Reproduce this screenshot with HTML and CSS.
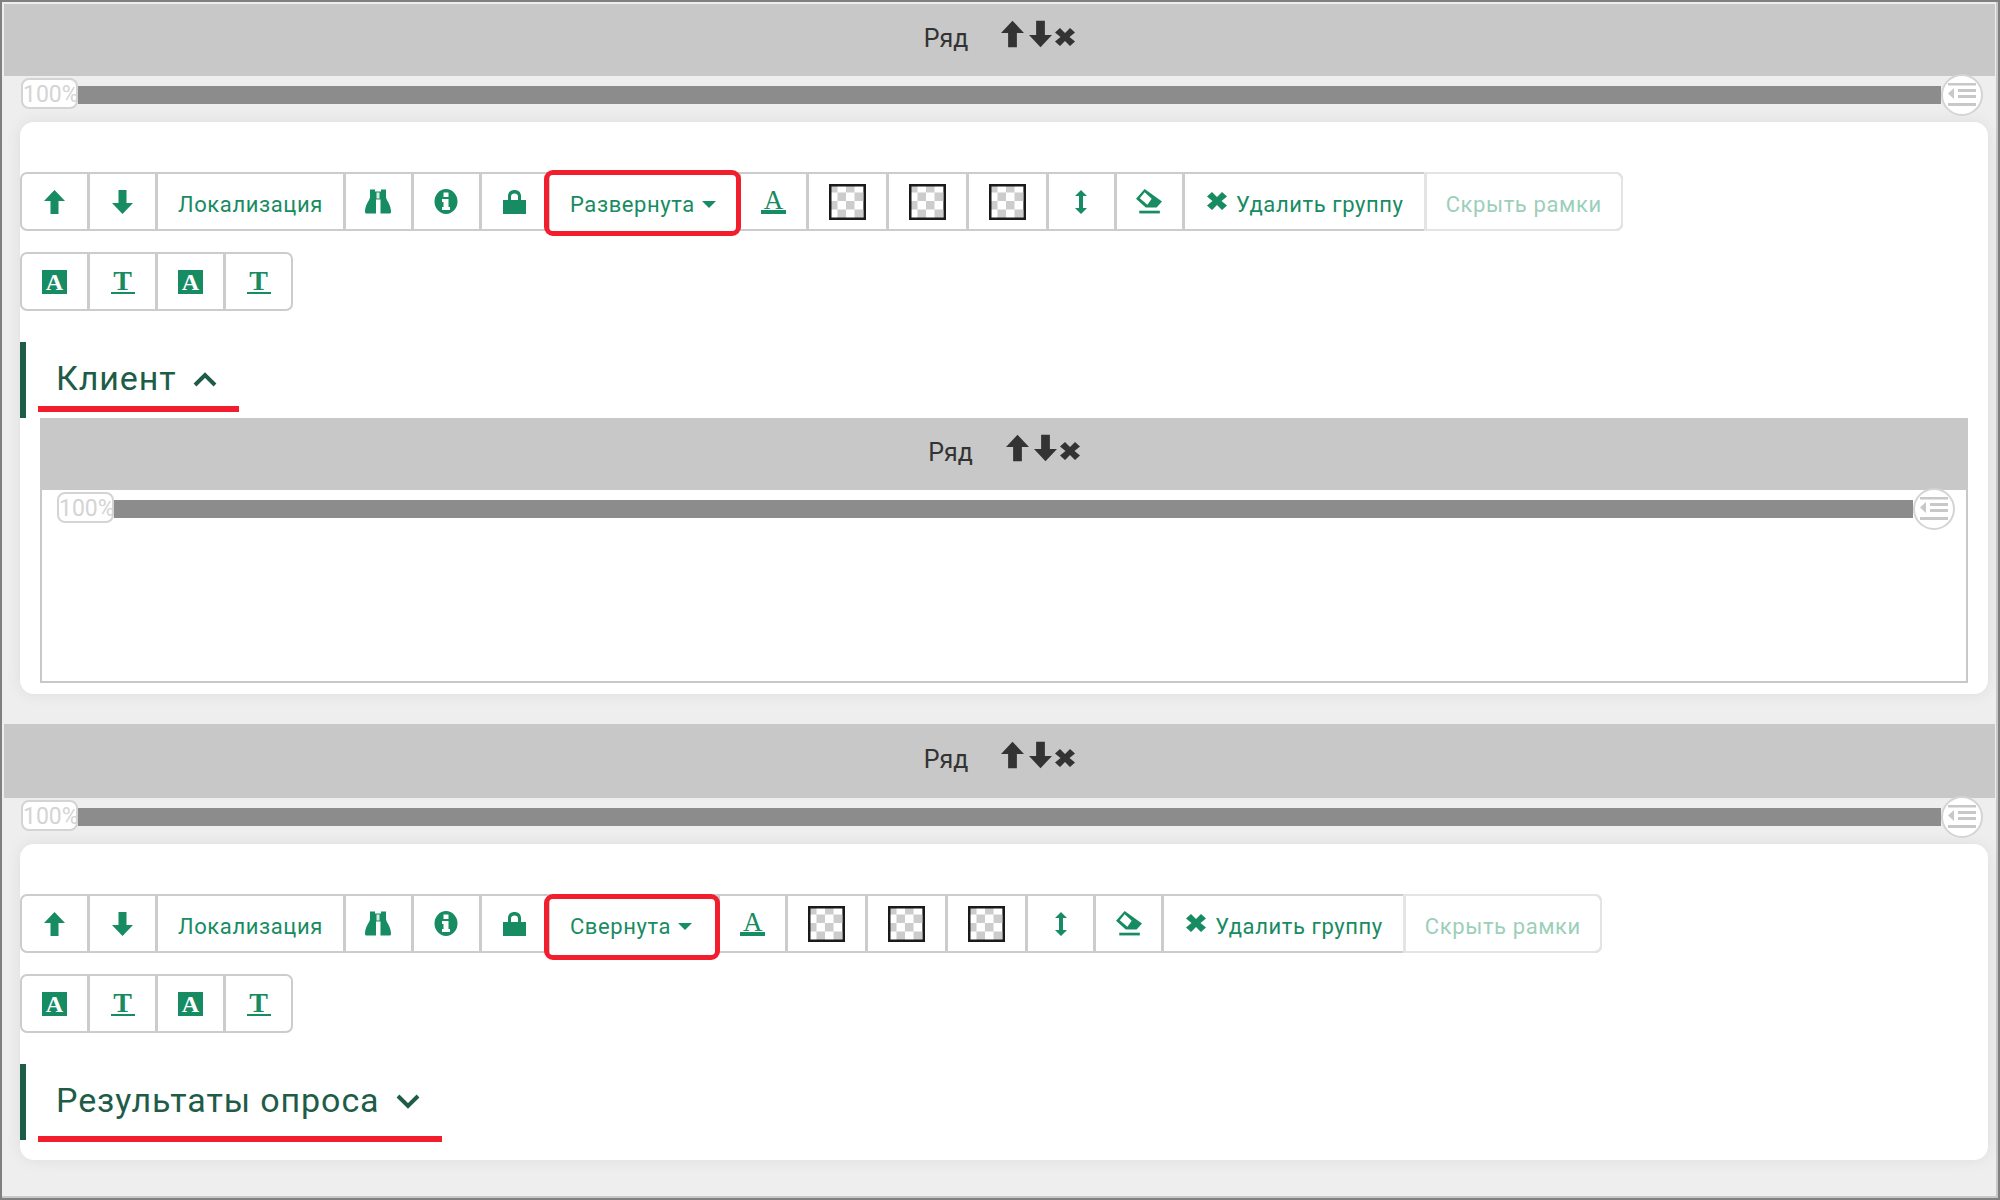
FILE: index.html
```html
<!DOCTYPE html>
<html lang="ru">
<head>
  <meta charset="UTF-8">
  <title>Конструктор формы</title>
  <link rel="stylesheet" href="styles.css">
</head>
<body>

  <svg class="defs" width="0" height="0">
    <symbol id="i-up" viewBox="0 0 21 24"><path d="M10.5 0 21 11h-6.500v13h-8V11H0z"/></symbol>
    <symbol id="i-down" viewBox="0 0 21 24"><path d="M10.5 24 0 13h6.500V0h8v13H21z"/></symbol>
    <symbol id="i-close" viewBox="0 0 20 18"><path d="M5 0l5 5 5-5 5 4.500-5.500 4.500L20 13.500 15 18l-5-5-5 5-5-4.500L5.500 9 0 4.500z"/></symbol>
    <symbol id="i-binoculars" viewBox="0 0 26 24"><path d="M5 0h5v2h6V0h5v8c1 4 5 7 5 14.500 0 .9-.5 1.500-1.500 1.500h-9V10H11v14H1.500C.5 24 0 23.400 0 22.500 0 15 4 12 5 8z"/><path fill="#d8ece4" d="M11.500 3h3v6h-3z"/></symbol>
    <symbol id="i-info" viewBox="0 0 25 25"><path fill-rule="evenodd" d="M12.500 0a11.500 12.500 0 1 1 0 25 11.500 12.500 0 0 1 0-25zM10 3.500v4.500h5V3.500zM8.500 10v3H10v5H8.500v3h8v-3H15v-8z"/></symbol>
    <symbol id="i-lock" viewBox="0 0 23 24"><path fill-rule="evenodd" d="M0 10h5V6c0-4 3-6 6.500-6S18 2 18 6v4h5v14H0zM8 10h7V6.500c0-2-1.500-3-3.500-3S8 4.500 8 6.500z"/></symbol>
    <symbol id="i-updown" viewBox="0 0 12 24"><path d="M6 0l6 6H8v12h4l-6 6-6-6h4V6H0z"/></symbol>
    <symbol id="i-eraser" viewBox="0 0 24 23"><path fill-rule="evenodd" d="M8 0 24 11.500 19 17H9L0 9zM8 3 3.500 8.500l7 6 4-5.500z"/><path d="M3 20h19v2.500H3z"/></symbol>
    <symbol id="i-outdent" viewBox="0 0 28 24"><path d="M0 0h28v2.500H0zM10 6h18v3H10zM10 12h18v3H10zM0 20h28v3H0zM6 5v11L0 10.500z"/></symbol>
    <pattern id="checker" width="17" height="17" patternUnits="userSpaceOnUse">
      <path fill="#ccc" d="M0 0h8.500v8.500H0zM8.500 8.500H17V17H8.500z"/>
    </pattern>
  </svg>

  <div class="page">

    <section class="row">
      <div class="row-head">
        <span class="row-title">Ряд</span>
        <svg class="row-icon"><use href="#i-up"/></svg>
        <svg class="row-icon"><use href="#i-down"/></svg>
        <svg class="row-close"><use href="#i-close"/></svg>
      </div>
      <div class="slider">
        <span class="pill">100%</span>
        <div class="bar"></div>
        <span class="knob"><svg><use href="#i-outdent"/></svg></span>
      </div>

      <div class="card">
        <div class="toolbar">
          <button class="btn btn-icon"><svg class="ic ic-arrow"><use href="#i-up"/></svg></button>
          <button class="btn btn-icon"><svg class="ic ic-arrow"><use href="#i-down"/></svg></button>
          <button class="btn btn-text">Локализация</button>
          <button class="btn btn-icon"><svg class="ic ic-wide"><use href="#i-binoculars"/></svg></button>
          <button class="btn btn-icon"><svg class="ic ic-wide"><use href="#i-info"/></svg></button>
          <button class="btn btn-icon"><svg class="ic ic-arrow"><use href="#i-lock"/></svg></button>
          <button class="btn btn-state marked">Развернута <i class="caret"></i></button>
          <button class="btn btn-icon"><span class="letter-a">A</span></button>
          <button class="btn btn-swatch"><svg class="swatch"><rect width="37" height="36" fill="#fff"/><rect width="37" height="36" fill="url(#checker)"/><rect x="1.250" y="1.250" width="34.500" height="33.500" fill="none" stroke="#1a1a1a" stroke-width="2.500"/></svg></button>
          <button class="btn btn-swatch"><svg class="swatch"><rect width="37" height="36" fill="#fff"/><rect width="37" height="36" fill="url(#checker)"/><rect x="1.250" y="1.250" width="34.500" height="33.500" fill="none" stroke="#1a1a1a" stroke-width="2.500"/></svg></button>
          <button class="btn btn-swatch"><svg class="swatch"><rect width="37" height="36" fill="#fff"/><rect width="37" height="36" fill="url(#checker)"/><rect x="1.250" y="1.250" width="34.500" height="33.500" fill="none" stroke="#1a1a1a" stroke-width="2.500"/></svg></button>
          <button class="btn btn-icon"><svg class="ic ic-thin"><use href="#i-updown"/></svg></button>
          <button class="btn btn-icon"><svg class="ic ic-wide"><use href="#i-eraser"/></svg></button>
          <button class="btn btn-text btn-delete"><svg class="ic-x"><use href="#i-close"/></svg>Удалить группу</button>
          <button class="btn btn-text btn-off">Скрыть рамки</button>
        </div>

        <div class="toolbar">
          <button class="btn btn-icon"><span class="letter-box">A</span></button>
          <button class="btn btn-icon"><span class="letter-t">T</span></button>
          <button class="btn btn-icon"><span class="letter-box">A</span></button>
          <button class="btn btn-icon"><span class="letter-t">T</span></button>
        </div>

        <div class="group-head">
          <h2 class="group-title">Клиент
            <svg class="chevron" viewBox="0 0 24 15"><path d="M2 13 12 3l10 10"/></svg>
          </h2>
        </div>

        <div class="inner">
          <div class="row-head">
            <span class="row-title">Ряд</span>
            <svg class="row-icon"><use href="#i-up"/></svg>
            <svg class="row-icon"><use href="#i-down"/></svg>
            <svg class="row-close"><use href="#i-close"/></svg>
          </div>
          <div class="slider">
            <span class="pill">100%</span>
            <div class="bar"></div>
            <span class="knob"><svg><use href="#i-outdent"/></svg></span>
          </div>
        </div>
      </div>
    </section>

    <section class="row row-next">
      <div class="row-head">
        <span class="row-title">Ряд</span>
        <svg class="row-icon"><use href="#i-up"/></svg>
        <svg class="row-icon"><use href="#i-down"/></svg>
        <svg class="row-close"><use href="#i-close"/></svg>
      </div>
      <div class="slider">
        <span class="pill">100%</span>
        <div class="bar"></div>
        <span class="knob"><svg><use href="#i-outdent"/></svg></span>
      </div>

      <div class="card card-closed">
        <div class="toolbar">
          <button class="btn btn-icon"><svg class="ic ic-arrow"><use href="#i-up"/></svg></button>
          <button class="btn btn-icon"><svg class="ic ic-arrow"><use href="#i-down"/></svg></button>
          <button class="btn btn-text">Локализация</button>
          <button class="btn btn-icon"><svg class="ic ic-wide"><use href="#i-binoculars"/></svg></button>
          <button class="btn btn-icon"><svg class="ic ic-wide"><use href="#i-info"/></svg></button>
          <button class="btn btn-icon"><svg class="ic ic-arrow"><use href="#i-lock"/></svg></button>
          <button class="btn btn-state marked">Свернута <i class="caret"></i></button>
          <button class="btn btn-icon"><span class="letter-a">A</span></button>
          <button class="btn btn-swatch"><svg class="swatch"><rect width="37" height="36" fill="#fff"/><rect width="37" height="36" fill="url(#checker)"/><rect x="1.250" y="1.250" width="34.500" height="33.500" fill="none" stroke="#1a1a1a" stroke-width="2.500"/></svg></button>
          <button class="btn btn-swatch"><svg class="swatch"><rect width="37" height="36" fill="#fff"/><rect width="37" height="36" fill="url(#checker)"/><rect x="1.250" y="1.250" width="34.500" height="33.500" fill="none" stroke="#1a1a1a" stroke-width="2.500"/></svg></button>
          <button class="btn btn-swatch"><svg class="swatch"><rect width="37" height="36" fill="#fff"/><rect width="37" height="36" fill="url(#checker)"/><rect x="1.250" y="1.250" width="34.500" height="33.500" fill="none" stroke="#1a1a1a" stroke-width="2.500"/></svg></button>
          <button class="btn btn-icon"><svg class="ic ic-thin"><use href="#i-updown"/></svg></button>
          <button class="btn btn-icon"><svg class="ic ic-wide"><use href="#i-eraser"/></svg></button>
          <button class="btn btn-text btn-delete"><svg class="ic-x"><use href="#i-close"/></svg>Удалить группу</button>
          <button class="btn btn-text btn-off">Скрыть рамки</button>
        </div>

        <div class="toolbar">
          <button class="btn btn-icon"><span class="letter-box">A</span></button>
          <button class="btn btn-icon"><span class="letter-t">T</span></button>
          <button class="btn btn-icon"><span class="letter-box">A</span></button>
          <button class="btn btn-icon"><span class="letter-t">T</span></button>
        </div>

        <div class="group-head">
          <h2 class="group-title">Результаты опроса
            <svg class="chevron" viewBox="0 0 24 15"><path d="M2 2l10 10L22 2"/></svg>
          </h2>
        </div>
      </div>
    </section>

  </div>

</body>
</html>
```

FILE: styles.css
```css
* { box-sizing: border-box; }
html, body {
  margin: 0;
  height: 1200px;
  overflow: hidden;
}
body {
  background: #eee;
  border: 2px solid #808080;
  font-family: Roboto, "Liberation Sans", sans-serif;
  color: #333;
}
.defs { position: absolute; }

.page {
  height: 1196px;
  margin: 0;
  padding: 2px 1px 0 2px;
  border-bottom: 2px solid #c8c8c8;
  border-right: 2px solid #c8c8c8;
}

/* row header and slider */
.row-head {
  display: flex;
  align-items: center;
  justify-content: center;
  height: 72px;
  background: #c8c8c8;
}
.row-next { margin-top: 30px; }
.row-next > .row-head { height: 74px; }
.row-title {
  margin: -4px 33px 0 0;
  font-size: 25px;
  color: #333;
}
.row-icon {
  width: 23px;
  height: 28px;
  margin: -12px 5px 0 0;
  fill: #333;
}
.row-close {
  width: 20px;
  height: 18px;
  margin: -6px 0 0 -2px;
  fill: #333;
}

.slider {
  display: flex;
  align-items: center;
  height: 38px;
  padding: 0 12px 0 17px;
}
.pill {
  flex: none;
  width: 57px;
  height: 31px;
  margin-top: -3px;
  border: 2px solid #d4d4d4;
  border-radius: 8px;
  background: #fff;
  color: #d4d4d4;
  font-size: 23px;
  line-height: 29px;
  white-space: nowrap;
}
.bar {
  flex: 1;
  height: 18px;
  background: #8c8c8c;
}
.knob {
  flex: none;
  display: flex;
  align-items: center;
  justify-content: center;
  width: 42px;
  height: 42px;
  border: 2px solid #d4d4d4;
  border-radius: 50%;
  background: #fff;
}
.knob svg {
  width: 28px;
  height: 24px;
  fill: #c8c8c8;
}

/* group card */
.card {
  margin: 8px 7px 0 16px;
  padding: 50px 20px 11px;
  background: #fff;
  border-radius: 14px;
  box-shadow: 0 0 16px rgba(0, 0, 0, .07);
}
.card-closed { padding-bottom: 20px; }

.toolbar {
  display: flex;
  width: max-content;
  height: 59px;
  margin: 0 0 21px -20px;
  border: 2px solid #ccc;
  border-radius: 7px;
  background: #fff;
}
.btn {
  display: flex;
  align-items: center;
  justify-content: center;
  height: 100%;
  padding: 0;
  border: 0;
  border-left: 3px solid #ccc;
  background: none;
  color: #178b62;
  font-family: inherit;
  font-size: 22px;
  letter-spacing: .6px;
  white-space: nowrap;
}
.btn:first-child { border-left: 0; }
.btn-icon { width: 68px; }
.btn-icon:first-child { width: 65px; }
.btn-text { padding: 5px 20px 0; }
.btn-swatch { width: 80px; }
.btn-state {
  position: relative;
  padding: 5px 22px 0 20px;
}
.card-closed .btn-state { padding-right: 25px; }
.btn-delete { padding: 5px 20px 0 22px; }
.btn-off {
  margin: -2px -2px -2px 0;
  height: 59px;
  padding: 5px 19px 0;
  border: 2px solid #e4e4e4;
  border-left-width: 3px;
  border-radius: 0 7px 7px 0;
  color: #9ccfba;
}

.ic { fill: #178b62; }
.ic-arrow { width: 23px; height: 24px; }
.ic-wide { width: 26px; height: 25px; }
.ic-thin { width: 12px; height: 24px; }
.ic-x {
  width: 20px;
  height: 18px;
  margin-right: 9px;
  margin-top: -6px;
  fill: #178b62;
}
.caret {
  display: inline-block;
  margin: 1px 0 0 7px;
  border: 7px solid transparent;
  border-top-color: #178b62;
  border-bottom: 0;
}
.swatch { width: 37px; height: 36px; }

.letter-a, .letter-t, .letter-box {
  font-family: "Liberation Serif", serif;
  font-weight: 700;
  text-align: center;
  letter-spacing: 0;
}
.letter-a {
  width: 25px;
  height: 24px;
  border-bottom: 4px solid #178b62;
  font-size: 27px;
  line-height: 20px;
  font-weight: 400;
}
.letter-t {
  width: 24px;
  height: 24px;
  border-bottom: 2px solid #178b62;
  font-size: 28px;
  line-height: 22px;
}
.letter-box {
  width: 25px;
  height: 24px;
  background: #178b62;
  color: #fff;
  font-size: 24px;
  line-height: 25px;
}

/* marked with red in the screenshot */
.marked::before {
  content: "";
  position: absolute;
  left: 0;
  right: 0;
  bottom: -2px;
  height: 2px;
  background: #fff;
}
.marked::after {
  content: "";
  position: absolute;
  top: -4px;
  bottom: -7px;
  left: -6px;
  right: -3px;
  border: 5px solid #f21e2d;
  border-radius: 9px;
}
.card-closed .marked::after {
  top: -2px;
  bottom: -9px;
}

.group-head {
  height: 76px;
  margin: 31px 0 0 -20px;
  padding-left: 12px;
  border-left: 6px solid #1e5c48;
}
.group-title {
  position: relative;
  display: inline-block;
  height: 70px;
  margin: 0;
  padding: 15px 22px 0 18px;
  border-bottom: 6px solid #f21e2d;
  color: #1e5c48;
  font-size: 34px;
  font-weight: 400;
  letter-spacing: .9px;
  line-height: 42px;
}
.card-closed .group-title { height: 78px; }
.chevron {
  position: relative;
  top: -3px;
  width: 24px;
  height: 15px;
  margin-left: 7px;
  fill: none;
  stroke: #1e5c48;
  stroke-width: 4;
}

.inner {
  height: 265px;
  border: 2px solid #c8c8c8;
  border-top: 0;
}
.inner .row-head { margin: 0 -2px; }
.inner .slider { padding: 0 11px 0 15px; }
```
